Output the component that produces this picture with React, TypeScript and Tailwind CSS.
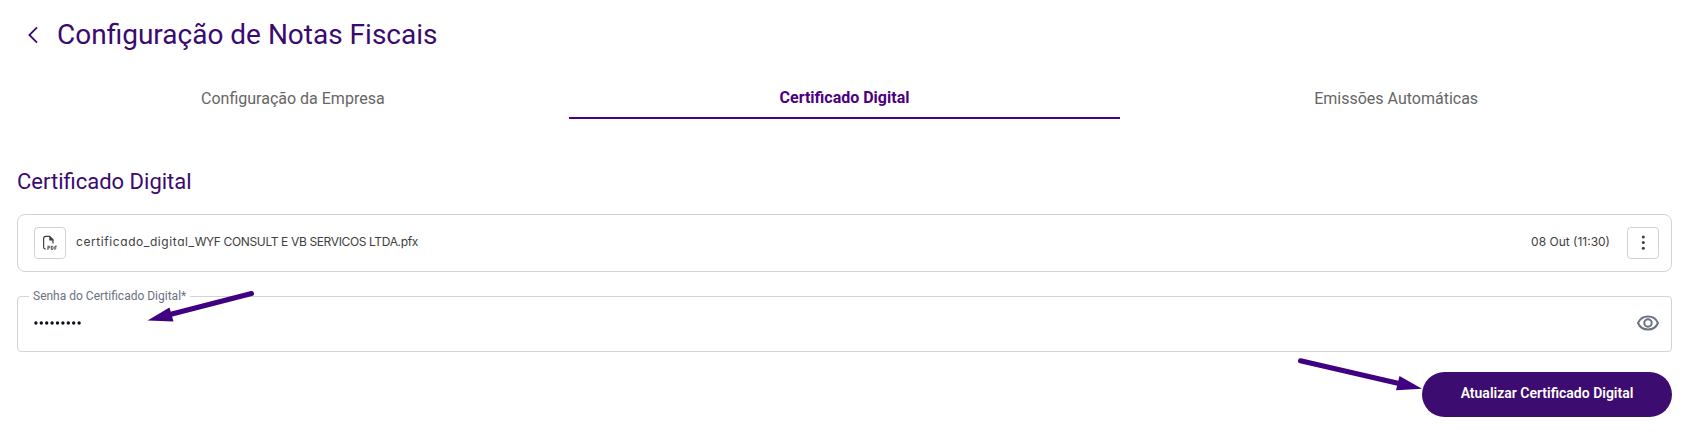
import React from "react";

const tabs = [
  { label: "Configuração da Empresa", active: false },
  { label: "Certificado Digital", active: true },
  { label: "Emissões Automáticas", active: false },
];

function PdfFileIcon() {
  return (
    <svg width="18" height="18" viewBox="0 0 18 18" fill="none" stroke="#404040" strokeWidth="1.2">
      <path d="M4.6 15.1H4.4Q2.6 14.8 2.6 13V4.4Q2.6 2.3 4.7 2.3H8.6L12 5.7V9.6" />
      <path d="M8.6 2.4V6.2H12.4Z" fill="#404040" strokeWidth="0.6" />
      <path d="M6.9 16V12.2H8.1Q8.9 12.2 8.9 13Q8.9 13.9 8.1 13.9H7M10.3 12.2V15.6H11Q12.2 15.6 12.2 13.9Q12.2 12.2 11 12.2ZM13.9 16V12.2H15.8M13.9 14H15.4" strokeWidth="0.9" />
    </svg>
  );
}

function EyeIcon() {
  return (
    <svg width="24" height="24" viewBox="0 0 24 24" fill="none" stroke="#6b7280" strokeWidth="2">
      <path d="M2 12C3.8 7.9 7.4 5.5 12 5.5S20.2 7.9 22 12C20.2 16.1 16.6 18.5 12 18.5S3.8 16.1 2 12Z" />
      <circle cx="12" cy="12" r="3.7" />
    </svg>
  );
}

export default function App() {
  return (
    <main className="relative h-[434px] w-full overflow-hidden bg-white pl-[17px] pr-[13px] font-['Roboto',sans-serif]">
      <header className="flex h-[68px] items-center pl-[9px] pt-[2px] text-[#3b0a70]">
        <svg width="14" height="20" viewBox="0 0 14 20" fill="none" stroke="currentColor" strokeWidth="1.8">
          <path d="M11 2.4L3.4 10L11 17.6" />
        </svg>
        <h1 className="ml-[17px] text-[28px] leading-[34px]">Configuração de Notas Fiscais</h1>
      </header>

      <nav className="grid h-[51px] grid-cols-3">
        {tabs.map((tab) => (
          <button
            key={tab.label}
            className={
              tab.active
                ? "border-b-2 border-[#4b0082] pt-[18px] pb-[7px] text-[16px] font-bold leading-6 text-[#4b0082]"
                : "pt-[19px] pb-[8px] text-[16px] leading-6 text-[#666666]"
            }
          >
            {tab.label}
          </button>
        ))}
      </nav>

      <h2 className="mt-[49px] text-[22px] leading-[28px] text-[#3b0a70]">Certificado Digital</h2>

      <section className="mt-[18px] flex h-[58px] items-center rounded-[8px] border border-[#d1d3d6] px-4 text-[12px] text-[#404040]">
        <span className="flex size-8 items-center justify-center rounded-[4px] border border-[#d1d3d6]">
          <PdfFileIcon />
        </span>
        <span className="ml-[10px] pb-[2px] font-['Inter',sans-serif] tracking-[-0.36px] [font-feature-settings:'cv11']">
          <span className="tracking-[0.58px]">certificado_digital_</span>WYF CONSULT E VB SERVICOS LTDA.pfx
        </span>
        <time className="ml-auto pb-[2px] font-['Inter',sans-serif]">08 Out (11:30)</time>
        <button aria-label="Mais opções" className="ml-[17px] -mr-[4px] flex size-8 items-center justify-center rounded-[4px] border border-[#d1d3d6]">
          <svg width="4" height="16" viewBox="0 0 4 16" fill="#404040">
            <circle cx="2.3" cy="2" r="1.5" />
            <circle cx="2.3" cy="7.6" r="1.5" />
            <circle cx="2.3" cy="13.2" r="1.5" />
          </svg>
        </button>
      </section>

      <fieldset className="mt-[15px] flex h-[65px] items-center justify-between rounded-[4px] border border-[#d1d3d6] pb-[10px] pl-[16px] pr-[11px]">
        <legend className="-ml-[5px] px-1 text-[12px] leading-[18px] text-[#6b7280]">Senha do Certificado Digital*</legend>
        <svg role="img" aria-label="Senha oculta" width="50" height="6" viewBox="0 0 50 6" fill="#0b1020">
          {Array.from({ length: 9 }, (_, i) => (
            <circle key={i} cx={1.9 + i * 5.4} cy="3" r="1.7" />
          ))}
        </svg>
        <EyeIcon />
      </fieldset>

      <div className="mt-5 flex justify-end">
        <button className="h-[45px] w-[250px] rounded-full bg-[#3c0c70] pb-[2px] text-[14px] font-semibold text-white">
          Atualizar Certificado Digital
        </button>
      </div>

      <svg className="pointer-events-none absolute inset-0" width="1685" height="434" viewBox="0 0 1685 434" fill="#3f0081" stroke="#3f0081">
        <path d="M251.5 293.5L170 314.5" strokeWidth="5" strokeLinecap="round" />
        <path d="M147.5 320.5L169.5 307.5L173.5 321.5Z" stroke="none" />
        <path d="M1300.5 360.7L1399 383.5" strokeWidth="5" strokeLinecap="round" />
        <path d="M1422 388.8L1399.5 376L1396 390.3Z" stroke="none" />
      </svg>
    </main>
  );
}
